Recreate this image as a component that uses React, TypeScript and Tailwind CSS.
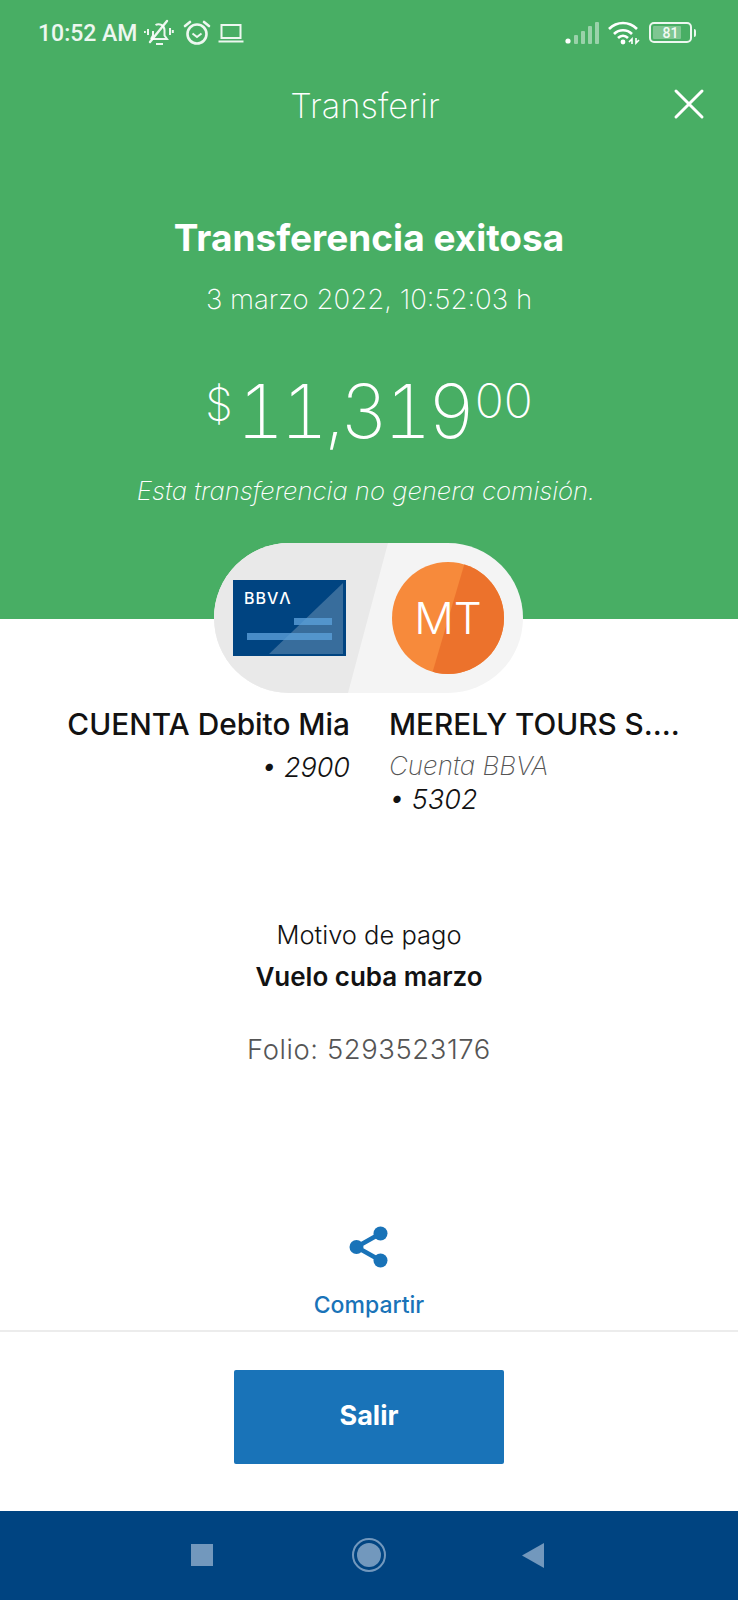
const font = { fontFamily: 'Inter, "Liberation Sans", sans-serif' }

function StatusBar() {
  return (
    <div className="flex items-center justify-between h-[64px] pt-[1px] pl-[38px] pr-[42px] text-white/90">
      <div className="flex items-center gap-[7px]">
        <span className="mt-[3px] font-['Roboto',sans-serif] text-[23px] font-medium">10:52 AM</span>
        {/* campana silenciada */}
        <svg width="30" height="30" viewBox="0 0 30 28" fill="none" stroke="currentColor" strokeWidth="2">
          <path d="M7 20h16l-2.5-3.5V11a6 6 0 0 0-9-5M9 12v4.5L7 20" />
          <path d="M6 23L23 2" strokeWidth="2.4" strokeLinecap="round" />
          <path d="M12 25h7M4 10v6M0.8 12v2M26 9v7M28.8 11v3" />
        </svg>
        {/* alarma */}
        <svg width="28" height="28" viewBox="0 0 28 28" fill="none" stroke="currentColor" strokeWidth="2.6" className="ml-[2px]">
          <circle cx="14" cy="15" r="9.5" />
          <path d="M9.5 14.5l4.5 3.5 4.5-3.5" strokeWidth="2" />
          <path d="M2 7l5-4M26 7l-5-4" strokeLinecap="round" />
        </svg>
        <svg width="26" height="22" viewBox="0 0 26 22" fill="none" stroke="currentColor" strokeWidth="2">
          <rect x="3.5" y="3" width="19" height="13" />
          <path d="M0.5 19.5h25" />
        </svg>
      </div>
      <div className="flex items-center gap-[8px]">
        <svg width="34" height="24" viewBox="0 0 34 24" fill="white">
          <circle cx="3" cy="20" r="2.6" />
          <rect x="9" y="14" width="4" height="9" rx="1" opacity=".45" />
          <rect x="16" y="10" width="4" height="13" rx="1" opacity=".45" />
          <rect x="23" y="5" width="4" height="18" rx="1" opacity=".45" />
          <rect x="30" y="1" width="4" height="22" rx="1" opacity=".45" />
        </svg>
        <svg width="34" height="26" viewBox="0 0 34 26" fill="none" stroke="white" strokeWidth="2.6">
          <path d="M2 9C10 1 22 1 30 9" />
          <path d="M7 14c5-5 13-5 18 0" />
          <path d="M11 18c3-3 7-3 10 0" />
          <circle cx="16" cy="22" r="2.4" fill="white" stroke="none" />
          <path d="M25 24v-5l-3 3M29 18v5l3-3" strokeWidth="1.6" />
        </svg>
        <div className="flex items-center">
          <div className="w-[43px] h-[21px] rounded-[5px] border-2 border-white/90 p-[2px] relative">
            <div className="w-[81%] h-full bg-white/30 rounded-[1px]" />
            <span className="absolute inset-0 flex items-center justify-center font-['Roboto',sans-serif] text-[14px] font-medium leading-none">81</span>
          </div>
          <div className="w-[2px] h-[8px] bg-white/90 ml-[2px] rounded-r-sm" />
        </div>
      </div>
    </div>
  )
}

function AccountPill() {
  return (
    <div className="relative z-10 -mt-[76px] ml-[214px] flex h-[150px] w-[309px] items-center overflow-hidden rounded-full bg-[#f4f4f4]">
      <div className="absolute inset-0 bg-[#e9e9e9] [clip-path:polygon(0_0,174px_0,134px_100%,0_100%)]" />
      {/* tarjeta BBVA */}
      <svg width="113" height="76" viewBox="0 0 113 76" className="relative ml-[19px] shrink-0">
        <rect width="113" height="76" fill="#004481" />
        <path d="M36 74L110 3v71z" fill="#fff" opacity=".22" />
        <rect x="61" y="38" width="38" height="7" fill="#5a9fd8" opacity=".8" />
        <rect x="14" y="53" width="85" height="7" fill="#5a9fd8" opacity=".8" />
        <text x="11" y="24" fill="#fff" fontSize="16" fontWeight="500" fontFamily="Inter, sans-serif" letterSpacing="1">BBVΛ</text>
      </svg>
      <div className="relative ml-[46px] flex h-[112px] w-[112px] shrink-0 items-center justify-center overflow-hidden rounded-full bg-[#f78a3b]">
        <div className="absolute inset-0 bg-[#ec722c] [clip-path:polygon(73px_0,112px_0,112px_112px,40px_112px)]" />
        <span className="relative text-[44px] font-light text-white">MT</span>
      </div>
    </div>
  )
}

export default function App() {
  return (
    <div style={font} className="flex h-[1600px] w-[738px] flex-col bg-white text-[#121212]">
      {/* cabecera verde */}
      <header className="h-[619px] shrink-0 bg-[#48ae64] text-white">
        <StatusBar />
        <div className="relative flex h-[80px] items-center justify-center pt-[3px] pr-[8px]">
          <h1 className="text-[34.5px] font-extralight">Transferir</h1>
          <svg width="32" height="32" viewBox="0 0 32 32" stroke="white" strokeWidth="3" strokeLinecap="round" className="absolute right-[33px] top-[24px]">
            <path d="M3 3l26 26M29 3L3 29" />
          </svg>
        </div>
        <div className="flex flex-col items-center">
          <h2 className="mt-[71px] text-[37px] font-bold leading-[46px]">Transferencia exitosa</h2>
          <p className="mt-[21px] text-[27.6px] font-extralight leading-[34px]">3 marzo 2022, 10:52:03 h</p>
          <p className="mt-[58px] flex items-start font-extralight leading-none">
            <span className="mt-[8px] text-[44px]">$</span>
            <span className="ml-[4px] text-[74px] tabular-nums tracking-[-4px]">11,319</span>
            <span className="ml-[3px] mt-[3px] text-[48px]">00</span>
          </p>
          <p className="mt-[26px] pr-[6px] text-[25.7px] font-extralight italic leading-[34px]">Esta transferencia no genera comisión.</p>
        </div>
      </header>

      <AccountPill />

      {/* cuentas */}
      <div className="mt-[14px] flex">
        <div className="w-[350px] text-right">
          <p className="text-[29.8px] font-medium leading-[34px]">CUENTA Debito Mia</p>
          <p className="mt-[10px] text-[27px] font-light italic leading-[34px]">• 2900</p>
        </div>
        <div className="ml-[39px] w-[300px]">
          <p className="text-[29.7px] font-medium leading-[34px]">MERELY TOURS S....</p>
          <p className="mt-[8px] text-[26px] font-extralight italic leading-[34px] text-[#555]">Cuenta BBVA</p>
          <p className="mt-[2px] text-[27px] font-light italic leading-[30px]">• 5302</p>
        </div>
      </div>

      {/* motivo */}
      <div className="mt-[102px] flex flex-col items-center">
        <p className="text-[25.5px] font-light leading-[36px]">Motivo de pago</p>
        <p className="mt-[6px] text-[26px] font-semibold leading-[36px]">Vuelo cuba marzo</p>
        <p className="mt-[36px] text-[27.4px] font-light leading-[36px] tracking-[0.6px] text-[#555]">Folio: 5293523176</p>
      </div>

      {/* compartir */}
      <div className="mt-auto flex flex-col items-center text-[#1973b8]">
        <svg width="40" height="44" viewBox="0 0 40 44" fill="currentColor">
          <circle cx="7.5" cy="22" r="7" />
          <circle cx="31.5" cy="8.5" r="7" />
          <circle cx="31.5" cy="35.5" r="7" />
          <path d="M7.5 22L31.5 8.5M7.5 22L31.5 35.5" stroke="currentColor" strokeWidth="4.5" />
        </svg>
        <span className="mt-[21px] text-[23px] font-medium leading-[30px]">Compartir</span>
      </div>

      {/* pie */}
      <div className="mt-[10px] h-[181px] shrink-0 border-t-2 border-[#ececec] pt-[38px]">
        <button className="mx-auto flex h-[94px] w-[270px] items-center justify-center rounded-[2px] bg-[#1973b8] pb-[1px] text-[27px] font-bold text-white">
          Salir
        </button>
      </div>

      {/* barra de navegacion */}
      <nav className="flex h-[89px] shrink-0 items-center justify-center gap-[139px] bg-[#004481] pr-[3px] pb-[1px]">
        <div className="h-[22px] w-[22px] bg-[#7298bd]" />
        <div className="flex h-[34px] w-[34px] items-center justify-center rounded-full border-2 border-[#7298bd]">
          <div className="h-[24px] w-[24px] rounded-full bg-[#7298bd]" />
        </div>
        <svg width="22" height="25" viewBox="0 0 22 25" fill="#7298bd" className="-ml-[3px]">
          <path d="M22 0v25L0 12.5z" />
        </svg>
      </nav>
    </div>
  )
}
